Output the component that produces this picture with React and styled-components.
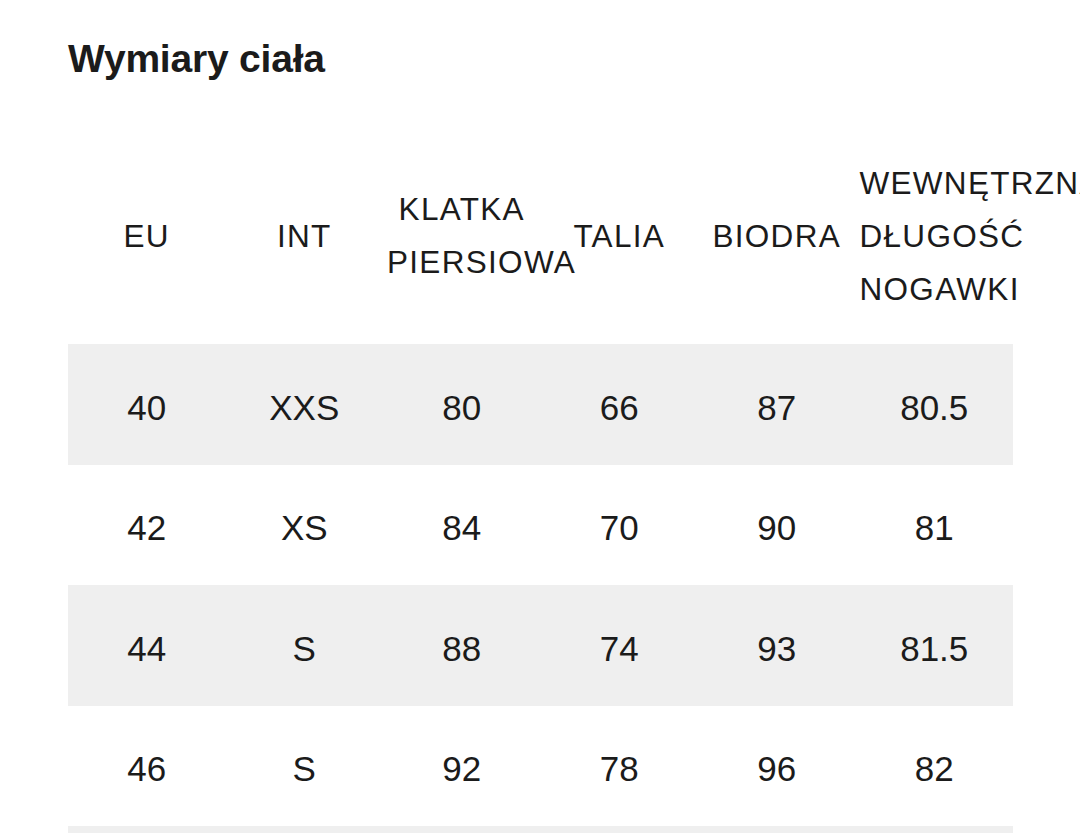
import React from "react";
import styled, { createGlobalStyle } from "styled-components";

const Global = createGlobalStyle`
  html, body {
    margin: 0;
    padding: 0;
    background: #ffffff;
    overflow: hidden;
  }
  body {
    font-family: "Liberation Sans", Arial, sans-serif;
    color: #1b1b1b;
  }
`;

const Page = styled.div`
  width: 1080px;
  height: 833px;
  padding: 40px 0 0 68px;
  box-sizing: border-box;
  overflow: hidden;
`;

const Title = styled.h1`
  margin: 0;
  font-size: 39px;
  line-height: 38px;
  font-weight: 700;
  letter-spacing: -0.2px;
  color: #1b1b1b;
`;

const Table = styled.table`
  margin-top: 50px;
  width: 945px;
  table-layout: fixed;
  border-collapse: collapse;
  border-spacing: 0;
`;

const HeadCell = styled.th`
  padding: 28.5px 4px;
  font-weight: 400;
  font-size: 31.5px;
  line-height: 53px;
  letter-spacing: 1.3px;
  text-align: center;
  vertical-align: middle;
  color: #1b1b1b;
  white-space: normal;
`;

const Row = styled.tr`
  background: ${(p) => (p.$striped ? "#efefef" : "#ffffff")};
  height: 120.5px;
`;

const Cell = styled.td`
  padding: 7px 4px 0;
  font-size: 35px;
  line-height: 40px;
  text-align: center;
  vertical-align: middle;
  color: #1b1b1b;
`;

const headers = [
  "EU",
  "INT",
  "KLATKA PIERSIOWA",
  "TALIA",
  "BIODRA",
  "WEWNĘTRZNA DŁUGOŚĆ NOGAWKI",
];

const rows = [
  ["40", "XXS", "80", "66", "87", "80.5"],
  ["42", "XS", "84", "70", "90", "81"],
  ["44", "S", "88", "74", "93", "81.5"],
  ["46", "S", "92", "78", "96", "82"],
  ["48", "M", "96", "82", "99", "82.5"],
];

export default function App() {
  return (
    <>
      <Global />
      <Page>
        <Title>Wymiary ciała</Title>
        <Table>
          <thead>
            <tr>
              {headers.map((h) => (
                <HeadCell key={h}>{h}</HeadCell>
              ))}
            </tr>
          </thead>
          <tbody>
            {rows.map((r, i) => (
              <Row key={i} $striped={i % 2 === 0}>
                {r.map((c, j) => (
                  <Cell key={j}>{c}</Cell>
                ))}
              </Row>
            ))}
          </tbody>
        </Table>
      </Page>
    </>
  );
}
